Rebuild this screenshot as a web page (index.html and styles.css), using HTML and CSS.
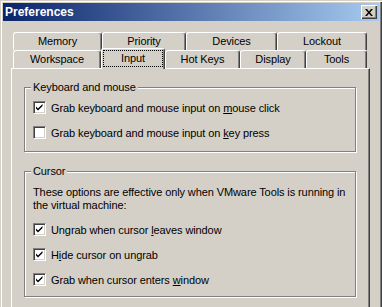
FILE: index.html
```html
<!DOCTYPE html>
<html lang="en">
<head>
    <meta charset="UTF-8">
    <title>Preferences</title>
    <link rel="stylesheet" href="styles.css">
</head>
<body>

<div class="window">
    <div class="titlebar">
        <span class="title">Preferences</span>
        <button class="close-btn">
            <svg width="8" height="7" viewBox="0 0 8 7"><path d="M0 0h2l2 2.5 2-2.5h2l-3 3.5 3 3.5h-2l-2-2.5-2 2.5h-2l3-3.5z" fill="#000"/></svg>
        </button>
    </div>

    <div class="content">
        <div class="tabs">
            <div class="tab-row">
                <div class="tab tab-memory">Memory</div>
                <div class="tab tab-priority">Priority</div>
                <div class="tab tab-devices">Devices</div>
                <div class="tab tab-lockout">Lockout</div>
            </div>
            <div class="tab-row">
                <div class="tab tab-workspace">Workspace</div>
                <div class="tab tab-input selected"><span class="focus">Input</span></div>
                <div class="tab tab-hotkeys">Hot Keys</div>
                <div class="tab tab-display">Display</div>
                <div class="tab tab-tools">Tools</div>
            </div>
        </div>

        <div class="panel">
            <fieldset class="group">
                <legend>Keyboard and mouse</legend>
                <label class="check">
                    <span class="box"><svg width="9" height="9" viewBox="0 0 9 9"><path d="M1 3.5l2 2 4.5-4.5v2l-4.5 4.5-2-2z" fill="#000"/></svg></span>
                    <span>Grab keyboard and mouse input on <u>m</u>ouse click</span>
                </label>
                <label class="check">
                    <span class="box"></span>
                    <span>Grab keyboard and mouse input on <u>k</u>ey press</span>
                </label>
            </fieldset>

            <fieldset class="group cursor-group">
                <legend>Cursor</legend>
                <p class="note">These options are effective only when VMware Tools is running in the virtual machine:</p>
                <label class="check">
                    <span class="box"><svg width="9" height="9" viewBox="0 0 9 9"><path d="M1 3.5l2 2 4.5-4.5v2l-4.5 4.5-2-2z" fill="#000"/></svg></span>
                    <span>Ungrab when cursor <u>l</u>eaves window</span>
                </label>
                <label class="check">
                    <span class="box"><svg width="9" height="9" viewBox="0 0 9 9"><path d="M1 3.5l2 2 4.5-4.5v2l-4.5 4.5-2-2z" fill="#000"/></svg></span>
                    <span>H<u>i</u>de cursor on ungrab</span>
                </label>
                <label class="check">
                    <span class="box"><svg width="9" height="9" viewBox="0 0 9 9"><path d="M1 3.5l2 2 4.5-4.5v2l-4.5 4.5-2-2z" fill="#000"/></svg></span>
                    <span>Grab when cursor enters <u>w</u>indow</span>
                </label>
            </fieldset>
        </div>
    </div>
</div>

</body>
</html>
```

FILE: styles.css
```css
body {
    margin: 0;
    padding: 0;
    font-family: "Liberation Sans", Arial, sans-serif;
    font-size: 11px;
    letter-spacing: -0.1px;
    color: #000;
    background: #d4d0c8;
}
.window {
    width: 382px;
    height: 307px;
    box-sizing: border-box;
    padding: 3px 3px 0 3px;
    background: #d4d0c8;
    box-shadow: inset 1px 1px 0 #d4d0c8, inset 2px 2px 0 #fff, inset -1px 0 0 #404040, inset -2px 0 0 #808080;
    overflow: hidden;
}
.titlebar {
    height: 18px;
    display: flex;
    align-items: center;
    justify-content: space-between;
    padding: 0 2px;
    background: linear-gradient(to right, #0a246a, #a6caf0);
}
.title {
    color: #fff;
    font-weight: bold;
    font-size: 12px;
    letter-spacing: 0;
    line-height: 18px;
}
.close-btn {
    width: 16px;
    height: 14px;
    padding: 0;
    margin: 0;
    display: flex;
    align-items: center;
    justify-content: center;
    background: #d4d0c8;
    border: none;
    box-shadow: inset 1px 1px 0 #fff, inset -1px -1px 0 #404040, inset -2px -2px 0 #808080;
}
.content {
    padding: 11px 9px 0 8px;
}
.tabs {
    margin-left: 2px;
    width: 354px;
}
.tab-row {
    display: flex;
    align-items: flex-end;
    height: 18px;
}
.tab {
    box-sizing: border-box;
    height: 18px;
    padding-top: 2px;
    line-height: 13px;
    text-align: center;
    background: #d4d0c8;
    border-top: 1px solid #fff;
    border-left: 1px solid #fff;
    border-right: 1px solid #404040;
    border-radius: 3px 3px 0 0;
    box-shadow: inset -1px 0 0 #808080;
}
.tab-memory { width: 89px; }
.tab-priority { width: 84px; }
.tab-devices { width: 91px; }
.tab-lockout { width: 90px; }
.tab-workspace { width: 88px; }
.tab-input { width: 64px; }
.tab-hotkeys { width: 75px; }
.tab-display { width: 66px; }
.tab-tools { width: 61px; }
.tab.selected {
    height: 21px;
    margin-top: -2px;
    margin-bottom: -1px;
    padding-top: 0;
    position: relative;
    z-index: 1;
}
.focus {
    display: block;
    margin: 1px 1px 2px 1px;
    height: 17px;
    box-sizing: border-box;
    line-height: 14px;
    border: 1px dotted #000;
}
.panel {
    width: 359px;
    height: 260px;
    box-sizing: border-box;
    padding: 12px 13px 0 12px;
    border-top: 1px solid #fff;
    border-left: 1px solid #fff;
    border-right: 1px solid #404040;
    box-shadow: inset -1px 0 0 #808080;
}
.group {
    margin: 0;
    padding: 1px 8px 6px 8px;
    border: 1px solid #808080;
    box-shadow: inset 1px 1px 0 #fff, 1px 1px 0 #fff;
}
.group legend {
    margin-left: -2px;
    padding: 0 2px;
    line-height: 13px;
    background: #d4d0c8;
}
.cursor-group {
    margin-top: 13px;
    padding-bottom: 4px;
}
.note {
    margin: 7px 0 5px 0;
    line-height: 13px;
}
.check {
    display: flex;
    align-items: center;
    height: 25px;
}
.box {
    width: 13px;
    height: 13px;
    box-sizing: border-box;
    margin-right: 5px;
    padding: 1px;
    background: #fff;
    border: 1px solid;
    border-color: #808080 #fff #fff #808080;
    box-shadow: inset 1px 1px 0 #404040, inset -1px -1px 0 #d4d0c8;
    display: flex;
    align-items: center;
    justify-content: center;
}
.box svg {
    display: block;
}
.check u {
    text-decoration: underline;
}
```
